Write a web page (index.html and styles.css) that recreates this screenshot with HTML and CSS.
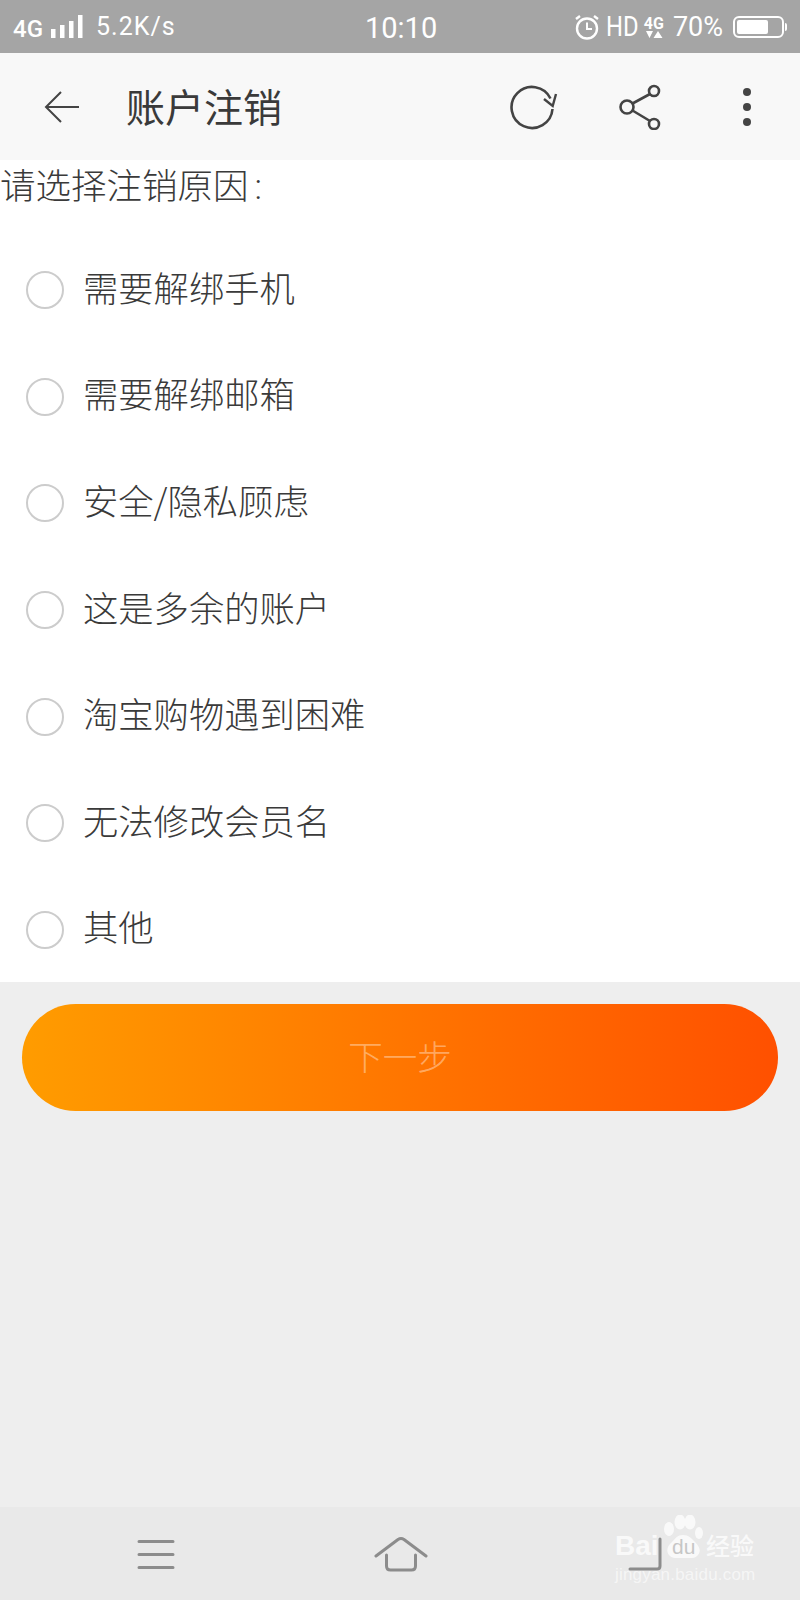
FILE: index.html
```html
<!DOCTYPE html>
<html lang="zh-CN">
  <head>
    <meta charset="UTF-8" />
    <title>账户注销</title>
    <link rel="stylesheet" href="styles.css">
  </head>
  <body>
    <div class="status-bar">
      <div class="status-left">
        <span class="net">4G</span>
        <svg class="signal" width="34" height="24" viewBox="0 0 34 24">
          <rect x="0" y="14" width="4.500" height="9" />
          <rect x="9" y="10" width="4.500" height="13" />
          <rect x="18" y="6" width="4.500" height="17" />
          <rect x="27" y="0" width="4.500" height="23" />
        </svg>
        <span class="speed">5.2K/s</span>
      </div>
      <div class="status-time">10:10</div>
      <div class="status-right">
        <svg class="alarm" width="26" height="26" viewBox="0 0 26 26" fill="none" stroke="#fff" stroke-width="2.400">
          <circle cx="13" cy="14.500" r="10" />
          <path d="M13 8.500v6.500h5" stroke-width="2" />
          <path d="M2 5l4-3M24 5l-4-3" />
        </svg>
        <span class="hd">HD</span>
        <div class="net-mini">
          <span class="net-mini-text">4G</span>
          <svg width="18" height="7" viewBox="0 0 18 7" fill="#fff">
            <path d="M1 0h7L4.500 7zM13 0l4.500 7h-9z" />
          </svg>
        </div>
        <span class="percent">70%</span>
        <div class="battery">
          <div class="battery-body"><div class="battery-fill"></div></div>
          <div class="battery-cap"></div>
        </div>
      </div>
    </div>

    <div class="toolbar">
      <svg class="back" width="36" height="32" viewBox="0 0 36 32" fill="none" stroke="#444" stroke-width="2">
        <path d="M35 16H2M17 1L2 16l15 15" />
      </svg>
      <div class="title">账户注销</div>
      <svg class="tool refresh" width="50" height="48" viewBox="0 0 50 48" fill="none" stroke="#444" stroke-width="2.600">
        <path d="M44.500 26A20.500 20.500 0 1 1 42.500 15.500" />
        <path d="M36 16l8.700 7L48 11" stroke-width="2.400" />
      </svg>
      <svg class="tool share" width="44" height="46" viewBox="0 0 44 46" fill="none" stroke="#444" stroke-width="2.600">
        <circle cx="8" cy="23" r="6.500" />
        <circle cx="35" cy="7" r="5" />
        <circle cx="35" cy="40" r="5" />
        <path d="M13.500 19.500L31 10M13.500 26.500L31 37" />
      </svg>
      <svg class="tool more" width="10" height="40" viewBox="0 0 10 40" fill="#444">
        <circle cx="5" cy="5" r="4" />
        <circle cx="5" cy="20" r="4" />
        <circle cx="5" cy="35" r="4" />
      </svg>
    </div>

    <div class="reason-panel">
      <div class="reason-title">请选择注销原因<span class="colon">:</span></div>
      <div class="reason-list">
        <div class="reason"><span class="radio"></span>需要解绑手机</div>
        <div class="reason"><span class="radio"></span>需要解绑邮箱</div>
        <div class="reason"><span class="radio"></span>安全/隐私顾虑</div>
        <div class="reason"><span class="radio"></span>这是多余的账户</div>
        <div class="reason"><span class="radio"></span>淘宝购物遇到困难</div>
        <div class="reason"><span class="radio"></span>无法修改会员名</div>
        <div class="reason"><span class="radio"></span>其他</div>
      </div>
    </div>

    <div class="actions">
      <button class="next">下一步</button>
    </div>

    <div class="nav-bar">
      <svg width="38" height="30" viewBox="0 0 38 30" fill="none" stroke="#8c8c8c" stroke-width="3" stroke-linecap="round">
        <path d="M2 2.500h34M2 15.500h34M2 28.500h34" />
      </svg>
      <svg width="54" height="36" viewBox="0 0 54 36" fill="none" stroke="#8c8c8c" stroke-width="3" stroke-linecap="round" stroke-linejoin="round">
        <path d="M2 20L24 3.500q3-2 6 0L52 20" />
        <path d="M12.500 19v11q0 4 4 4h21q4 0 4-4V19" />
      </svg>
      <svg width="36" height="36" viewBox="0 0 36 36" fill="none" stroke="#8c8c8c" stroke-width="3" stroke-linecap="round">
        <path d="M3 33h27q3 0 3-3V3" />
      </svg>
    </div>

    <div class="watermark">
      <div class="wm-logo">
        <span class="wm-bai">Bai</span>
        <div class="wm-paw">
          <svg width="40" height="43" viewBox="0 0 40 43" fill="#fff">
            <ellipse cx="6" cy="14" rx="5" ry="7" />
            <ellipse cx="17" cy="7" rx="5.500" ry="7.500" />
            <ellipse cx="27" cy="7" rx="5.500" ry="7.500" />
            <ellipse cx="36" cy="18" rx="4" ry="6" />
            <path d="M20 20c6 0 8 3 12 7 5 5 6 9 3 13-3 4-8 3-14 3s-12 1-15-3c-3-4-2-9 3-13 4-4 5-7 11-7z" />
          </svg>
          <span class="wm-du">du</span>
        </div>
        <span class="wm-jy">经验</span>
      </div>
      <div class="wm-url">jingyan.baidu.com</div>
    </div>
  </body>
</html>
```

FILE: styles.css
```css
html {
  background-color: #eee;
}
body {
  background-color: #eee;
  color: #3a3a3a;
  display: flex;
  flex-direction: column;
  font-family: "Noto Sans CJK SC", sans-serif;
  font-weight: 300;
  height: 1600px;
  margin: 0;
  overflow: hidden;
  position: relative;
  width: 800px;
}

/* status bar */
.status-bar {
  align-items: center;
  background-color: #a5a5a5;
  color: #fff;
  display: flex;
  font-family: Roboto, sans-serif;
  font-weight: 400;
  height: 53px;
  justify-content: space-between;
  padding: 0 13px;
  position: relative;
}
.status-left {
  align-items: center;
  display: flex;
}
.net {
  font-size: 24px;
  font-weight: 500;
  margin-top: 4px;
}
.signal {
  fill: #fff;
  margin-left: 8px;
}
.speed {
  font-size: 25px;
  letter-spacing: 1px;
  margin-left: 11px;
}
.status-time {
  font-size: 29px;
  left: 365px;
  padding-top: 2px;
  position: absolute;
}
.status-right {
  align-items: center;
  display: flex;
}
.alarm {
  margin-right: 6px;
}
.hd {
  display: inline-block;
  font-size: 28px;
  transform: scaleX(0.85);
  transform-origin: left center;
  width: 32px;
}
.net-mini {
  align-items: center;
  display: flex;
  flex-direction: column;
  margin-left: 6px;
}
.net-mini-text {
  font-size: 16px;
  font-weight: 700;
  line-height: 15px;
}
.percent {
  font-size: 27px;
  margin-left: 9px;
}
.battery {
  align-items: center;
  display: flex;
  margin-left: 10px;
}
.battery-body {
  border: 2px solid #fff;
  border-radius: 6px;
  box-sizing: border-box;
  height: 22px;
  padding: 2px;
  width: 51px;
}
.battery-fill {
  background-color: #fff;
  border-radius: 2px;
  height: 100%;
  width: 31px;
}
.battery-cap {
  background-color: #fff;
  border-radius: 0 2px 2px 0;
  height: 8px;
  margin-left: 1px;
  width: 2px;
}

/* toolbar */
.toolbar {
  align-items: center;
  background-color: #f8f8f8;
  display: flex;
  height: 107px;
}
.back {
  margin-left: 44px;
}
.title {
  flex: 1;
  font-size: 39px;
  font-weight: 400;
  margin-left: 46px;
  padding-bottom: 4px;
}
.refresh {
  margin-right: 61px;
}
.share {
  margin-right: 79px;
}
.more {
  margin-right: 48px;
}

/* reasons */
.reason-panel {
  background-color: #fff;
}
.reason-title {
  font-size: 35.500px;
  height: 48px;
  line-height: 48px;
}
.colon {
  font-family: Roboto, sans-serif;
  margin-left: 6px;
}
.reason-list {
  padding-top: 28px;
}
.reason {
  align-items: center;
  box-sizing: border-box;
  display: flex;
  font-size: 35.300px;
  height: 106.600px;
  padding-bottom: 6px;
}
.radio {
  border: 2.500px solid #ccc;
  border-radius: 50%;
  box-sizing: border-box;
  height: 38px;
  margin: 8px 19px 0 26px;
  width: 38px;
}

/* button */
.actions {
  flex: 1;
  padding: 22px 22px 0;
}
.next {
  background: linear-gradient(to right, #ff9c00, #ff5000);
  border: none;
  border-radius: 54px;
  color: rgba(255, 255, 255, 0.4);
  display: block;
  font-family: inherit;
  font-size: 34.500px;
  font-weight: 300;
  height: 107px;
  padding: 0 0 5px;
  width: 100%;
}

/* nav bar */
.nav-bar {
  align-items: center;
  background-color: #e9e9e9;
  display: flex;
  height: 93px;
  justify-content: space-between;
  padding: 0 137px 0 137px;
}

/* watermark over the nav bar */
.watermark {
  color: #fff;
  font-family: "Liberation Sans", sans-serif;
  left: 615px;
  opacity: 0.75;
  position: absolute;
  top: 1515px;
  width: 145px;
}
.wm-logo {
  align-items: flex-end;
  display: flex;
  height: 43px;
}
.wm-bai {
  font-size: 28px;
  font-weight: 700;
  line-height: 24px;
  white-space: nowrap;
  width: 48px;
}
.wm-paw {
  height: 43px;
  position: relative;
  width: 40px;
}
.wm-du {
  bottom: -1px;
  color: #bbb;
  font-size: 21px;
  left: 9px;
  position: absolute;
}
.wm-jy {
  font-family: "Noto Sans CJK SC", sans-serif;
  font-size: 24px;
  font-weight: 500;
  line-height: 26px;
  margin-left: 3px;
  white-space: nowrap;
}
.wm-url {
  font-size: 17px;
  font-weight: 400;
  letter-spacing: 0.2px;
  margin-top: 7px;
  opacity: 0.8;
  white-space: nowrap;
}
```
